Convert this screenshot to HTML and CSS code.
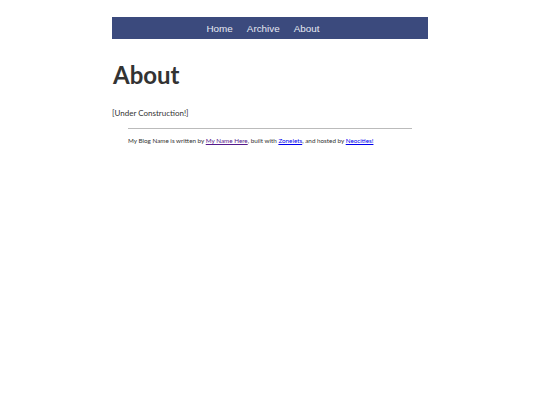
FILE: index.html
```html
<!DOCTYPE html>
<html>
<head>
<meta charset="utf-8">
<link rel="stylesheet" href="styles.css">
</head>
<body>
<div class="container">
  <nav class="nav">
    <a href="#">Home</a>
    <a href="#">Archive</a>
    <a href="#">About</a>
  </nav>
  <h1 class="title">About</h1>
  <p class="body-text">[Under Construction!]</p>
  <footer class="footer">
    <hr class="rule">
    <p class="credit">My Blog Name is written by <a class="visited" href="#">My Name Here</a>, built with <a href="#">Zonelets</a>, and hosted by <a href="#">Neocities!</a></p>
  </footer>
</div>
</body>
</html>
```
FILE: styles.css
```css
html, body {
  margin: 0;
  padding: 0;
  background: #fff;
}
body {
  font-family: Lato, "Noto Sans", sans-serif;
  color: #333;
}
.container {
  width: 316px;
  margin: 0 auto;
  padding-top: 17px;
}
.nav {
  background: #3b4a7d;
  height: 22px;
  display: flex;
  justify-content: center;
  align-items: center;
  gap: 14px;
  padding-right: 14px;
}
.nav a {
  font-family: "Liberation Sans", Arial, sans-serif;
  color: #e6e9f3;
  text-decoration: none;
  font-size: 9.9px;
}
.title {
  font-size: 24px;
  font-weight: 700;
  margin: 20px 0 0 1px;
  line-height: 32px;
  color: #333;
}
.body-text {
  font-size: 8px;
  margin: 16px 0 0 0;
  line-height: 12px;
}
.footer {
  margin: 0 16px;
}
.rule {
  border: 0;
  border-top: 1px solid #bbb;
  margin: 9px 0 0 0;
}
.credit {
  font-size: 6.3px;
  margin: 7px 0 0 0;
  line-height: 9px;
}
.credit a {
  color: #00e;
}
.credit a.visited {
  color: #551a8b;
}
```
